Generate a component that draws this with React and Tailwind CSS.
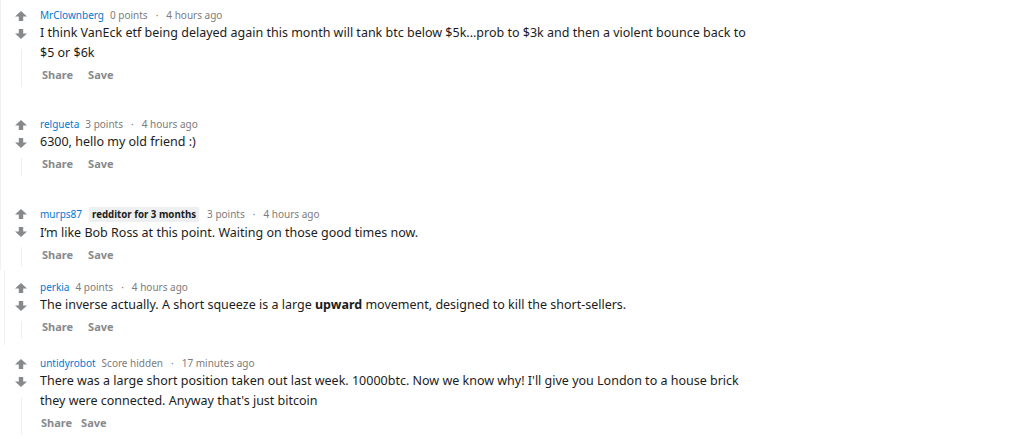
import React from "react";

const Up = () => (
  <svg width="12" height="10" viewBox="0 0 12 10" className="block">
    <polygon points="6,0 12,5.6 8.2,5.6 8.2,10 3.8,10 3.8,5.6 0,5.6" fill="#878a8c" />
  </svg>
);
const Down = () => (
  <svg width="12" height="10" viewBox="0 0 12 10" className="block">
    <polygon points="6,10 12,4.4 8.2,4.4 8.2,0 3.8,0 3.8,4.4 0,4.4" fill="#878a8c" />
  </svg>
);

function Comment({
  user,
  badge,
  score,
  time,
  children,
  colW = "w-[40px]",
  arrowMl = "ml-[15px]",
  lineMl = "ml-[21px]",
  actionsPl = "pl-[2px]",
  saveGap = "ml-[15px]",
  className = "",
}) {
  return (
    <div className={"flex " + className}>
      <div className={colW + " shrink-0 flex flex-col items-start"}>
        <div className={"h-[17px] flex items-center " + arrowMl}><Up /></div>
        <div className={"h-[20px] flex items-center " + arrowMl}><Down /></div>
        <div className={"flex-1 w-px bg-[#edeff1] mt-[5px] " + lineMl} />
      </div>
      <div className="flex flex-col">
        <div className={(badge ? "h-[18px]" : "h-[16px]") + " flex items-center text-[10px] text-[#7c7c7c] whitespace-nowrap"}>
          <span className="text-[#0079d3]">{user}</span>
          {badge && (
            <span className="ml-[7px] px-[3px] bg-[#edeff1] text-[#1c1c1c] font-bold text-[9.7px] leading-[15px]">{badge}</span>
          )}
          <span className={badge ? "ml-[8px]" : "ml-[6px]"}>{score}</span>
          <span className="mx-[8px]">·</span>
          <span>{time}</span>
        </div>
        <div className="w-[712px] text-[12.5px] leading-[20px] text-[#1c1c1c]">{children}</div>
        <div className={"h-[24px] flex items-center text-[11px] font-bold text-[#878a8c] " + actionsPl}>
          <span>Share</span>
          <span className={saveGap}>Save</span>
        </div>
      </div>
    </div>
  );
}

export default function App() {
  return (
    <div
      className="w-[1024px] h-[439px] bg-white overflow-hidden"
      style={{ fontFamily: '"Noto Sans", "Open Sans", sans-serif' }}
    >
      <div className="border-l border-[#f0f1f2] pt-[7px] pb-[3px]">
        <Comment colW="w-[39px]" arrowMl="ml-[14px]" lineMl="ml-[20px]" user="MrClownberg" score="0 points" time="4 hours ago">
          I think VanEck etf being delayed again this month will tank btc below $5k...prob to $3k and then a violent bounce back to $5 or $6k
        </Comment>
        <Comment colW="w-[39px]" arrowMl="ml-[14px]" lineMl="ml-[20px]" className="mt-[29px]" user="relgueta" score="3 points" time="4 hours ago">
          6300, hello my old friend :)
        </Comment>
        <Comment
          colW="w-[39px]"
          arrowMl="ml-[14px]"
          lineMl="ml-[20px]"
          className="mt-[29px]"
          user="murps87"
          badge="redditor for 3 months"
          score="3 points"
          time="4 hours ago"
        >
          I’m like Bob Ross at this point. Waiting on those good times now.
        </Comment>
      </div>
      <div className="ml-[4px] border-l border-[#f0f1f2] pt-[9px] pb-[6px]">
        <Comment colW="w-[35px]" arrowMl="ml-[10px]" lineMl="ml-[16px]" user="perkia" score="4 points" time="4 hours ago">
          The inverse actually. A short squeeze is a large <b>upward</b> movement, designed to kill the short-sellers.
        </Comment>
      </div>
      <div className="pt-[10px]">
        <Comment
          user="untidyrobot"
          score="Score hidden"
          time="17 minutes ago"
          actionsPl="pl-[1px]"
          saveGap="ml-[9px]"
        >
          There was a large short position taken out last week. 10000btc. Now we know why! I'll give you London to a house brick they were connected. Anyway that's just bitcoin
        </Comment>
      </div>
    </div>
  );
}
